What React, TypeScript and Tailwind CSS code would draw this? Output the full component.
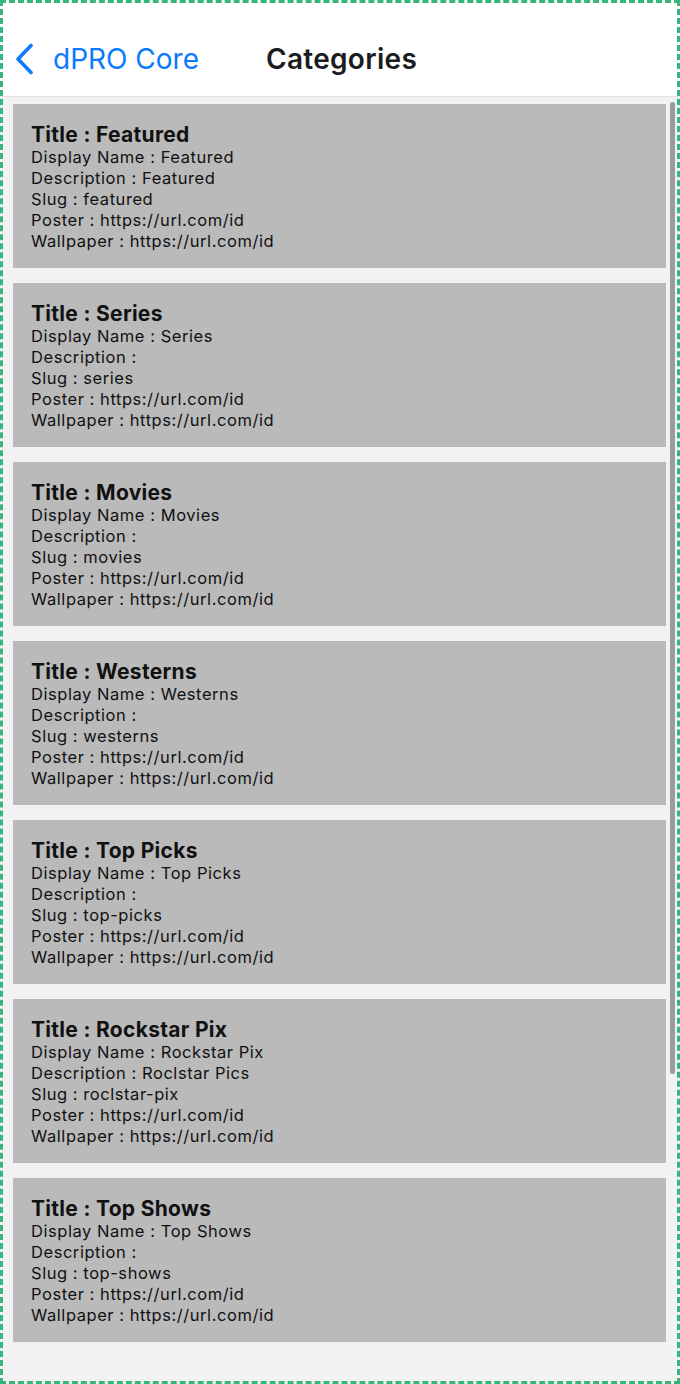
const categories = [
  { title: 'Featured', displayName: 'Featured', description: 'Featured', slug: 'featured' },
  { title: 'Series', displayName: 'Series', description: '', slug: 'series' },
  { title: 'Movies', displayName: 'Movies', description: '', slug: 'movies' },
  { title: 'Westerns', displayName: 'Westerns', description: '', slug: 'westerns' },
  { title: 'Top Picks', displayName: 'Top Picks', description: '', slug: 'top-picks' },
  { title: 'Rockstar Pix', displayName: 'Rockstar Pix', description: 'Roclstar Pics', slug: 'roclstar-pix' },
  { title: 'Top Shows', displayName: 'Top Shows', description: '', slug: 'top-shows' },
]

function BackChevron() {
  return (
    <svg width="22" height="32" viewBox="0 0 22 32" fill="none" aria-hidden="true">
      <path d="M18 2.5 L5 16 L18 29.5" stroke="#0a7aff" strokeWidth="3.6" strokeLinecap="round" strokeLinejoin="round" />
    </svg>
  )
}

export default function App() {
  return (
    <div className="relative w-[680px] h-[1384px] overflow-hidden bg-[#f2f2f2] font-['Inter',sans-serif]">
      {/* Nav bar */}
      <div className="flex h-[97px] items-end border-b border-[#e2e2e2] bg-white pb-[20px]">
        <div className="flex items-center pl-[13px]">
          <BackChevron />
          <span className="ml-[18px] text-[28px] leading-[34px] text-[#0a7aff]">dPRO Core</span>
        </div>
        <span className="ml-[67px] text-[28px] font-semibold leading-[34px] tracking-[0.3px] text-[#1c1c1e]">
          Categories
        </span>
      </div>

      {/* Category list */}
      <div className="flex flex-col gap-[15px] pl-[13px] pr-[14px] pt-[7px]">
        {categories.map((c) => (
          <div key={c.slug} className="h-[164px] bg-[#bababa] px-[18px] pt-[19px] text-[#111]">
            <div className="text-[21px] font-bold leading-[24px] tracking-[0.3px]">Title : {c.title}</div>
            <div className="text-[16.5px] leading-[21px] tracking-[0.55px]">
              <div>Display Name : {c.displayName}</div>
              <div>Description : {c.description}</div>
              <div>Slug : {c.slug}</div>
              <div>Poster : https://url.com/id</div>
              <div>Wallpaper : https://url.com/id</div>
            </div>
          </div>
        ))}
      </div>

      {/* Scroll indicator */}
      <div className="absolute left-[670px] top-[102px] h-[972px] w-[5px] rounded-full bg-[#9b9b9b]" />

      {/* Dashed frame */}
      <div className="pointer-events-none absolute inset-0 border-[3px] border-dashed border-[#35b77c]" />
    </div>
  )
}
